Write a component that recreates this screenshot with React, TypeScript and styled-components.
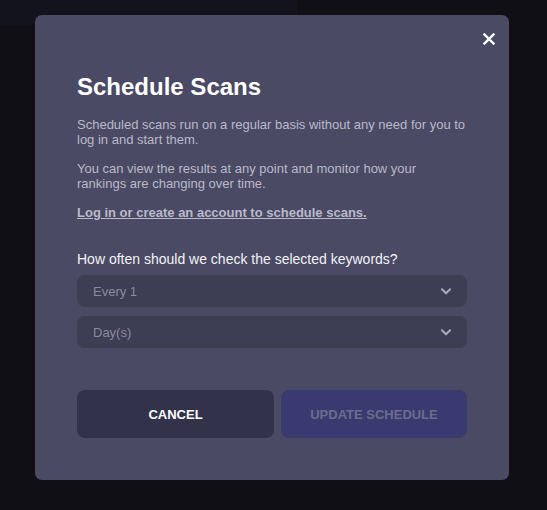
import React from 'react'
import styled, { createGlobalStyle } from 'styled-components'

const Global = createGlobalStyle`
  html, body {
    margin: 0;
    padding: 0;
    background: #0f0f15;
    font-family: "Liberation Sans", Arial, sans-serif;
  }
`

const Backdrop = styled.div`
  position: relative;
  width: 547px;
  height: 510px;
  background: #0f0f15;
  overflow: hidden;
`

const PageHeader = styled.div`
  width: 297px;
  height: 25px;
  background: #13131d;
`

const Modal = styled.div`
  position: absolute;
  left: 35px;
  top: 15px;
  width: 474px;
  height: 465px;
  box-sizing: border-box;
  padding: 58px 42px 42px;
  background: #4a4a64;
  border-radius: 7px;
  display: flex;
  flex-direction: column;
`

const Close = styled.button`
  position: absolute;
  top: 16px;
  right: 12px;
  width: 16px;
  height: 16px;
  padding: 0;
  border: none;
  background: none;
  cursor: pointer;
  display: flex;
  align-items: center;
  justify-content: center;
`

const Title = styled.h2`
  margin: 0 0 16px;
  font-size: 24px;
  line-height: 28px;
  font-weight: 700;
  color: #ffffff;
`

const Text = styled.p`
  margin: 0 0 14px;
  font-size: 13px;
  line-height: 15px;
  color: #b9b9c9;
`

const Link = styled.a`
  display: block;
  font-size: 13px;
  line-height: 15px;
  font-weight: 700;
  color: #b9b9c9;
  text-decoration: underline;
  margin-bottom: 31px;
`

const Label = styled.div`
  font-size: 14px;
  line-height: 16px;
  color: #f2f2f6;
  margin-bottom: 8px;
`

const Select = styled.div`
  height: 32px;
  border-radius: 8px;
  background: #3d3d54;
  display: flex;
  align-items: center;
  justify-content: space-between;
  padding: 0 14px 0 16px;
  margin-bottom: 9px;
  font-size: 13px;
  color: #8a8aa0;
`

const Buttons = styled.div`
  display: grid;
  grid-template-columns: 197px 186px;
  gap: 7px;
  margin-top: auto;
`

const Button = styled.button<{ $primary?: boolean }>`
  height: 48px;
  border: none;
  border-radius: 8px;
  font-family: "Liberation Sans", Arial, sans-serif;
  font-size: 13px;
  font-weight: 700;
  background: ${p => (p.$primary ? '#3a3a70' : '#32324a')};
  color: ${p => (p.$primary ? '#6c6c8c' : '#ffffff')};
`

const Chevron = () => (
  <svg width="14" height="14" viewBox="0 0 24 24" fill="none" stroke="#a9a9bb" strokeWidth="3.5" strokeLinecap="round" strokeLinejoin="round">
    <path d="M5 9l7 7 7-7" />
  </svg>
)

export default function App() {
  return (
    <Backdrop>
      <Global />
      <PageHeader />
      <Modal>
        <Close aria-label="Close">
          <svg width="12" height="12" viewBox="0 0 12 12" stroke="#ffffff" strokeWidth="2.4" strokeLinecap="square">
            <path d="M1.5 1.5l9 9M10.5 1.5l-9 9" />
          </svg>
        </Close>
        <Title>Schedule Scans</Title>
        <Text>Scheduled scans run on a regular basis without any need for you to log in and start them.</Text>
        <Text>You can view the results at any point and monitor how your rankings are changing over time.</Text>
        <Link href="#">Log in or create an account to schedule scans.</Link>
        <Label>How often should we check the selected keywords?</Label>
        <Select>
          <span>Every 1</span>
          <Chevron />
        </Select>
        <Select>
          <span>Day(s)</span>
          <Chevron />
        </Select>
        <Buttons>
          <Button>CANCEL</Button>
          <Button $primary>UPDATE SCHEDULE</Button>
        </Buttons>
      </Modal>
    </Backdrop>
  )
}
